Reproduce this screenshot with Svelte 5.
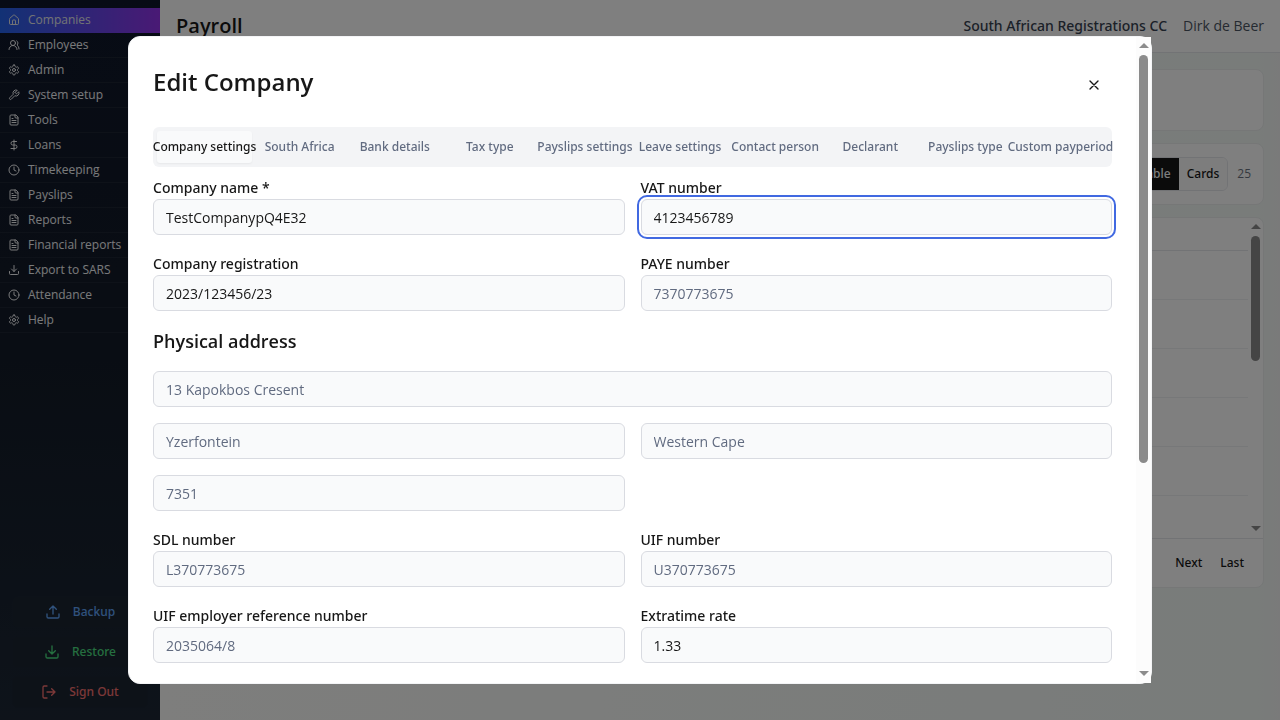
<script>
  const nav = [
    ['Companies', 'home'],
    ['Employees', 'users'],
    ['Admin', 'gear'],
    ['System setup', 'wrench'],
    ['Tools', 'file'],
    ['Loans', 'dollar'],
    ['Timekeeping', 'clock'],
    ['Payslips', 'file'],
    ['Reports', 'file'],
    ['Financial reports', 'file'],
    ['Export to SARS', 'download'],
    ['Attendance', 'clock'],
    ['Help', 'gear']
  ];
  const actions = [
    ['Backup', 'upload', 'blue'],
    ['Restore', 'download', 'green'],
    ['Sign Out', 'logout', 'red']
  ];
  const tabs = [
    'Company settings', 'South Africa', 'Bank details', 'Tax type', 'Payslips settings',
    'Leave settings', 'Contact person', 'Declarant', 'Payslips type', 'Custom payperiod'
  ];
  const rows = [1, 2, 3, 4, 5, 6];
  let activeTab = $state(0);
  let vatInput;
  $effect(() => {
    vatInput?.focus();
    vatInput?.setSelectionRange(10, 10);
  });
</script>

{#snippet icon(name)}
  <svg viewBox="0 0 24 24" fill="none" stroke="currentColor" stroke-width="2" stroke-linecap="round" stroke-linejoin="round" aria-hidden="true">
    {#if name === 'home'}
      <path d="M15 21v-8a1 1 0 0 0-1-1h-4a1 1 0 0 0-1 1v8" />
      <path d="M3 10a2 2 0 0 1 .709-1.528l7-5.999a2 2 0 0 1 2.582 0l7 5.999A2 2 0 0 1 21 10v9a2 2 0 0 1-2 2H5a2 2 0 0 1-2-2z" />
    {:else if name === 'users'}
      <path d="M18 21a8 8 0 0 0-16 0" />
      <circle cx="10" cy="8" r="5" />
      <path d="M22 20c0-3.37-2-6.5-4-8a5 5 0 0 0-.45-8.3" />
    {:else if name === 'gear'}
      <path d="M12.22 2h-.44a2 2 0 0 0-2 2v.18a2 2 0 0 1-1 1.73l-.43.25a2 2 0 0 1-2 0l-.15-.08a2 2 0 0 0-2.73.73l-.22.38a2 2 0 0 0 .73 2.73l.15.1a2 2 0 0 1 1 1.72v.51a2 2 0 0 1-1 1.74l-.15.09a2 2 0 0 0-.73 2.73l.22.38a2 2 0 0 0 2.73.73l.15-.08a2 2 0 0 1 2 0l.43.25a2 2 0 0 1 1 1.73V20a2 2 0 0 0 2 2h.44a2 2 0 0 0 2-2v-.18a2 2 0 0 1 1-1.73l.43-.25a2 2 0 0 1 2 0l.15.08a2 2 0 0 0 2.73-.73l.22-.39a2 2 0 0 0-.73-2.73l-.15-.08a2 2 0 0 1-1-1.74v-.5a2 2 0 0 1 1-1.74l.15-.09a2 2 0 0 0 .73-2.73l-.22-.38a2 2 0 0 0-2.73-.73l-.15.08a2 2 0 0 1-2 0l-.43-.25a2 2 0 0 1-1-1.73V4a2 2 0 0 0-2-2z" />
      <circle cx="12" cy="12" r="3" />
    {:else if name === 'wrench'}
      <path d="M14.7 6.3a1 1 0 0 0 0 1.4l1.6 1.6a1 1 0 0 0 1.4 0l3.77-3.77a6 6 0 0 1-7.94 7.94l-6.91 6.91a2.12 2.12 0 0 1-3-3l6.91-6.91a6 6 0 0 1 7.94-7.94l-3.76 3.76z" />
    {:else if name === 'file'}
      <path d="M15 2H6a2 2 0 0 0-2 2v16a2 2 0 0 0 2 2h12a2 2 0 0 0 2-2V7Z" />
      <path d="M14 2v4a2 2 0 0 0 2 2h4" />
      <path d="M10 9H8M16 13H8M16 17H8" />
    {:else if name === 'dollar'}
      <path d="M12 2v20" />
      <path d="M17 5H9.5a3.5 3.5 0 0 0 0 7h5a3.5 3.5 0 0 1 0 7H6" />
    {:else if name === 'clock'}
      <circle cx="12" cy="12" r="10" />
      <path d="M12 6v6l4 2" />
    {:else if name === 'download'}
      <path d="M21 15v4a2 2 0 0 1-2 2H5a2 2 0 0 1-2-2v-4" />
      <path d="m7 10 5 5 5-5M12 15V3" />
    {:else if name === 'upload'}
      <path d="M21 15v4a2 2 0 0 1-2 2H5a2 2 0 0 1-2-2v-4" />
      <path d="m17 8-5-5-5 5M12 3v12" />
    {:else if name === 'logout'}
      <path d="M9 21H5a2 2 0 0 1-2-2V5a2 2 0 0 1 2-2h4" />
      <path d="m16 17 5-5-5-5M21 12H9" />
    {:else if name === 'close'}
      <path d="M18 6 6 18M6 6l12 12" />
    {/if}
  </svg>
{/snippet}

{#snippet rail()}
  <div class="rail" aria-hidden="true">
    <span class="arrow up"></span>
    <span class="track"><span class="thumb"></span></span>
    <span class="arrow down"></span>
  </div>
{/snippet}

<div class="app">
  <aside>
    <nav>
      {#each nav as [label, glyph], i}
        <a href="#{glyph}" class:current={i === 0}>{@render icon(glyph)}{label}</a>
      {/each}
    </nav>
    <div class="actions">
      {#each actions as [label, glyph, tone]}
        <button class={tone}>{@render icon(glyph)}{label}</button>
      {/each}
    </div>
  </aside>
  <div class="page">
    <header>
      <h1>Payroll</h1>
      <div class="who"><strong>South African Registrations CC</strong><span>Dirk de Beer</span></div>
    </header>
    <main>
      <section class="card intro"></section>
      <section class="card tools">
        <div class="toggle"><button class="on">Table</button><button>Cards</button></div>
        <span>25</span>
      </section>
      <section class="card list">
        <div class="scroller">
          <div class="rows">
            {#each rows as row (row)}<div></div>{/each}
          </div>
          {@render rail()}
        </div>
        <footer><button>Next</button><button>Last</button></footer>
      </section>
    </main>
  </div>
</div>

<div class="overlay">
  <div class="modal" role="dialog" aria-modal="true" aria-labelledby="title">
    <div class="body">
      <div class="head">
        <h2 id="title">Edit Company</h2>
        <button class="close" aria-label="Close">{@render icon('close')}</button>
      </div>
      <div class="tabs" role="tablist">
        {#each tabs as tab, i}
          <button role="tab" aria-selected={i === activeTab} class:active={i === activeTab} onclick={() => (activeTab = i)}>{tab}</button>
        {/each}
      </div>
      <form>
        <div class="field"><label for="name">Company name *</label><input id="name" value="TestCompanypQ4E32" /></div>
        <div class="field"><label for="vat">VAT number</label><input id="vat" bind:this={vatInput} value="4123456789" /></div>
        <div class="field"><label for="reg">Company registration</label><input id="reg" value="2023/123456/23" /></div>
        <div class="field"><label for="paye">PAYE number</label><input id="paye" placeholder="7370773675" /></div>
        <h3>Physical address</h3>
        <input class="wide" aria-label="Street" placeholder="13 Kapokbos Cresent" />
        <input aria-label="City" placeholder="Yzerfontein" />
        <input aria-label="Province" placeholder="Western Cape" />
        <input class="first" aria-label="Postal code" placeholder="7351" />
        <div class="field first"><label for="sdl">SDL number</label><input id="sdl" placeholder="L370773675" /></div>
        <div class="field"><label for="uif">UIF number</label><input id="uif" placeholder="U370773675" /></div>
        <div class="field"><label for="ref">UIF employer reference number</label><input id="ref" placeholder="2035064/8" /></div>
        <div class="field"><label for="rate">Extratime rate</label><input id="rate" value="1.33" /></div>
      </form>
    </div>
    {@render rail()}
  </div>
</div>

<style>
  :global(body) { margin: 0; }
  * { box-sizing: border-box; }
  .app, .overlay { font-family: "Open Sans", "Noto Sans", sans-serif; font-size: 14px; line-height: 20px; color: #171717; }
  button, input { font: inherit; color: inherit; }
  button { border: 0; background: none; padding: 0; cursor: pointer; }
  .actions button, .who strong, .toggle button, footer button, .tabs button, label { font-family: "Noto Sans", sans-serif; font-weight: 500; }
  h1, h2, h3 { margin: 0; }
  svg { flex: none; display: block; }

  .app { display: flex; height: 100vh; overflow: hidden; }
  aside { width: 160px; flex: none; display: flex; flex-direction: column; justify-content: space-between; padding: 8px 0; background: linear-gradient(#0f172a, #131b28 50%, #1c2735); color: #f3f4f6; }
  nav a { display: flex; align-items: center; gap: 8px; height: 25px; padding: 0 8px; border-bottom: 1px solid #1d2533; color: inherit; text-decoration: none; font-size: 12px; line-height: 16px; }
  nav a.current { background: linear-gradient(90deg, #2563eb, #9333ea); color: #e5e7eb; border-color: transparent; background-origin: border-box; }
  nav svg { width: 12px; height: 12px; }
  .actions { display: flex; flex-direction: column; gap: 8px; padding: 0 12px 4px; }
  .actions button { display: flex; align-items: center; justify-content: center; gap: 12px; height: 32px; border: 1px solid #1a2433; border-radius: 6px; background: #1b2530; font-size: 12px; }
  .actions svg { width: 16px; height: 16px; }
  .blue { color: #60a5fa; }
  .green { color: #4ade80; }
  .red { color: #f87171; }

  .page { flex: 1; min-width: 0; background: linear-gradient(90deg, #fcfcfa, #f2f8f5 98%, #f4f5f4); }
  header { display: flex; align-items: center; justify-content: space-between; height: 53px; padding: 0 16px; border-bottom: 1px solid #e5e7eb; background: #fff; }
  h1 { font-size: 20px; line-height: 28px; font-weight: 600; }
  .who { display: flex; gap: 16px; color: #4b5563; }
  .who strong { color: #374151; }
  main { display: flex; flex-direction: column; gap: 12px; padding: 16px; }
  .card { border: 1px solid #eceeee; border-radius: 8px; background: #fff; }
  .intro { height: 62px; }
  .tools { display: flex; align-items: center; justify-content: flex-end; gap: 9px; height: 62px; padding: 0 12px; font-size: 12px; color: #6b7280; }
  .toggle { display: flex; border: 1px solid #e5e7eb; border-radius: 6px; overflow: hidden; color: #171717; }
  .toggle button { height: 32px; padding: 0 8px; background: #fafafa; }
  .toggle .on { background: #171717; color: #fafafa; }
  .list { overflow: hidden; }
  .scroller { display: flex; height: 321px; overflow: hidden; border-bottom: 1px solid #e5e7eb; }
  .rows { flex: 1; }
  .rows div { height: 49px; border-bottom: 1px solid #eef0f2; }
  .rows div:first-child { height: 33px; border-color: #e5e7eb; }
  .scroller .thumb { height: 44%; }
  footer { display: flex; align-items: center; justify-content: flex-end; height: 48px; gap: 18px; padding: 0 19px; font-size: 12px; }

  .overlay { position: fixed; inset: 0; display: flex; align-items: center; justify-content: center; background: rgba(0, 0, 0, 0.5); }
  .modal { display: flex; width: 80%; height: 90vh; border: 1px solid #f3f4f6; border-radius: 12px; background: #fff; }
  .body { flex: 1; min-width: 0; overflow-y: auto; scrollbar-width: none; padding: 24px; }
  .head { display: flex; align-items: center; justify-content: space-between; height: 48px; margin-bottom: 18px; }
  h2 { font-size: 24px; line-height: 32px; font-weight: 600; padding-bottom: 6px; }
  h2, h3 { color: #171717; }
  .close { display: grid; place-items: center; width: 36px; height: 36px; }
  .close svg { width: 16px; height: 16px; }
  .tabs { display: grid; grid-template-columns: repeat(10, minmax(0, 1fr)); height: 40px; padding: 4px; border-radius: 6px; background: #f3f4f6; color: #616b80; }
  .tabs button { display: flex; align-items: center; justify-content: center; border-radius: 3px; font-size: 12px; line-height: 16px; white-space: nowrap; }
  .tabs .active { background: #f9fafb; color: #171717; box-shadow: 0 1px 2px rgba(0, 0, 0, 0.05); }
  form { display: grid; grid-template-columns: 1fr 1fr; gap: 16px; padding-top: 8px; }
  .field { display: flex; flex-direction: column; min-width: 0; }
  label { padding-top: 2px; line-height: 22px; }
  input { width: 100%; height: 36px; min-width: 0; padding: 0 12px; border: 1px solid #d9dbe1; border-radius: 6px; background: #f9fafb; outline: 0; caret-color: transparent; }
  input:focus { outline: 2px solid #4169e1; outline-offset: 2px; }
  input::placeholder { color: #616b80; opacity: 1; }
  h3 { grid-column: 1 / -1; font-size: 18px; line-height: 28px; font-weight: 600; }
  .wide { grid-column: 1 / -1; }
  .first { grid-column: 1; }

  .rail { display: flex; flex-direction: column; align-items: center; width: 15px; flex: none; background: #fcfcfc; padding: 6px 0 7px; }
  .scroller .rail { background: none; }
  .arrow { width: 0; height: 0; border: 5px solid transparent; }
  .up { border-top: 0; border-bottom-color: #8b8b8b; }
  .down { border-bottom: 0; border-top-color: #8b8b8b; }
  .track { flex: 1; width: 9px; padding: 7px 0; }
  .thumb { display: block; height: 67%; border-radius: 5px; background: #8b8b8b; }
</style>
